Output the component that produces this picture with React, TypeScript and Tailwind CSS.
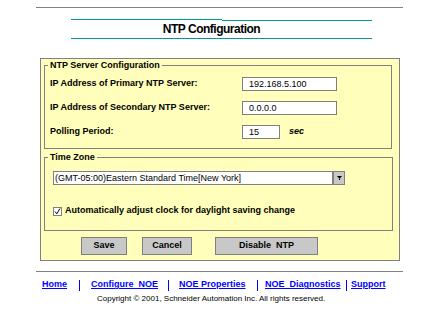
const links = [
  { label: 'Home', w: 'w-[26px]', ml: 'ml-[42px]' },
  { label: 'Configure\u00a0\u00a0NOE', w: 'w-[68px]', ml: 'ml-[11px]' },
  { label: 'NOE\u00a0Properties', w: 'w-[71px]', ml: 'ml-[10px]' },
  { label: 'NOE\u00a0\u00a0Diagnostics', w: 'w-[77px]', ml: 'ml-[7px]' },
  { label: 'Support', w: 'w-[34px]', ml: 'ml-[4px]' },
];

const pipeMargins = ['ml-[11px]', 'ml-[9px]', 'ml-[7px]', 'ml-[4px]'];

function Field({ value, width }: { value: string; width: string }) {
  return (
    <input
      readOnly
      value={value}
      className={`${width} h-[14px] border border-[#808080] bg-white pl-[6px] text-[9px] leading-[12px] outline-none`}
    />
  );
}

function Legend({ children }: { children: React.ReactNode }) {
  return (
    <legend className="ml-[3px] px-[2px] text-[9px] font-bold leading-[12px]">{children}</legend>
  );
}

export default function App() {
  return (
    <div className="w-[440px] h-[320px] overflow-hidden bg-white text-black font-['Liberation_Sans',Arial,sans-serif]">
      {/* top rule */}
      <div className="pt-[7px]">
        <div className="ml-[36px] w-[367px] h-px bg-[#808080]" />
      </div>

      {/* title */}
      <div className="ml-[71px] mt-[11px] w-[301px]">
        <div className="flex h-[2px]">
          <div className="w-[151px] h-px bg-[#009999]" />
          <div className="flex-1 h-px mt-px bg-[#009999]" />
        </div>
        <div className="h-[18px] pr-[20px] leading-[17px] text-center text-[12px] font-bold tracking-[-0.5px] border-b border-[#009999]">
          NTP Configuration
        </div>
      </div>

      {/* main panel */}
      <div className="ml-[40px] mt-[19px] w-[360px] border border-[#808080] bg-[#ffffbb] pl-[3px] pb-[5px]">
        <fieldset className="w-[348px] border border-[#808080]">
          <Legend>NTP Server Configuration</Legend>
          <div className="pl-[5px] pt-px pb-[4px]">
            <div className="flex h-6 items-center">
              <span className="w-[192px] text-[9px] font-bold">IP Address of Primary NTP Server:</span>
              <Field value="192.168.5.100" width="w-[95px]" />
            </div>
            <div className="flex h-6 items-center">
              <span className="w-[192px] text-[9px] font-bold">IP Address of Secondary NTP Server:</span>
              <Field value="0.0.0.0" width="w-[95px]" />
            </div>
            <div className="flex h-6 items-center">
              <span className="w-[192px] text-[9px] font-bold">Polling Period:</span>
              <Field value="15" width="w-[38px]" />
              <span className="ml-[9px] text-[9px] font-bold italic">sec</span>
            </div>
          </div>
        </fieldset>

        <fieldset className="mt-[2px] w-[349px] border border-[#808080]">
          <Legend>Time Zone</Legend>
          <div className="pl-[8px] pt-[8px] pb-[13px]">
            <div className="flex w-[292px] h-[14px]">
              <div className="flex-1 border border-[#808080] bg-white pl-px text-[9px] leading-[12px] whitespace-nowrap overflow-hidden">
                (GMT-05:00)Eastern Standard Time[New York]
              </div>
              <div className="w-[12px] border border-[#808080] bg-[#c8c8c8] flex items-center justify-center">
                <svg width="5" height="4" viewBox="0 0 5 4">
                  <polygon points="0,0 5,0 2.5,3" fill="#000" />
                  <rect x="2" y="3" width="1" height="1" fill="#000" />
                </svg>
              </div>
            </div>
            <div className="mt-[20px] flex h-[12px] items-center">
              <div className="w-[9px] h-[9px] border border-[#808080] bg-white flex items-center justify-center">
                <svg width="7" height="7" viewBox="0 0 7 7">
                  <path d="M1 3.5 L2.8 5.8 L6 0.5" stroke="#000" strokeWidth="1" fill="none" />
                </svg>
              </div>
              <span className="ml-[3px] text-[9px] font-bold">Automatically adjust clock for daylight saving change</span>
            </div>
          </div>
        </fieldset>

        <div className="mt-[6px] flex h-[18px]">
          <button className="ml-[37px] w-[46px] border border-[#808080] bg-[#c8c8c8] text-[9px] font-bold">Save</button>
          <button className="ml-[15px] w-[50px] border border-[#808080] bg-[#c8c8c8] text-[9px] font-bold">Cancel</button>
          <button className="ml-[23px] w-[103px] border border-[#808080] bg-[#c8c8c8] text-[9px] font-bold">Disable&nbsp;&nbsp;NTP</button>
        </div>
      </div>

      {/* footer */}
      <div className="ml-[36px] mt-[10px] w-[367px] h-px bg-[#808080]" />
      <div className="mt-[7px] flex h-[12px] items-center">
        {links.map((l, i) => (
          <div key={l.label} className="flex items-center">
            {i > 0 && <span className={`${pipeMargins[i - 1]} w-px h-[11px] bg-[#0000ff]`} />}
            <a
              href="#"
              className={`${i === 0 ? l.ml : l.ml} ${l.w} whitespace-nowrap text-[9px] font-bold text-[#0000ff] underline`}
            >
              {l.label}
            </a>
          </div>
        ))}
      </div>
      <div className="mt-[3px] ml-[97px] h-[10px] leading-[10px] text-[8px] whitespace-nowrap">
        Copyright © 2001, Schneider Automation Inc. All rights reserved.
      </div>
    </div>
  );
}
